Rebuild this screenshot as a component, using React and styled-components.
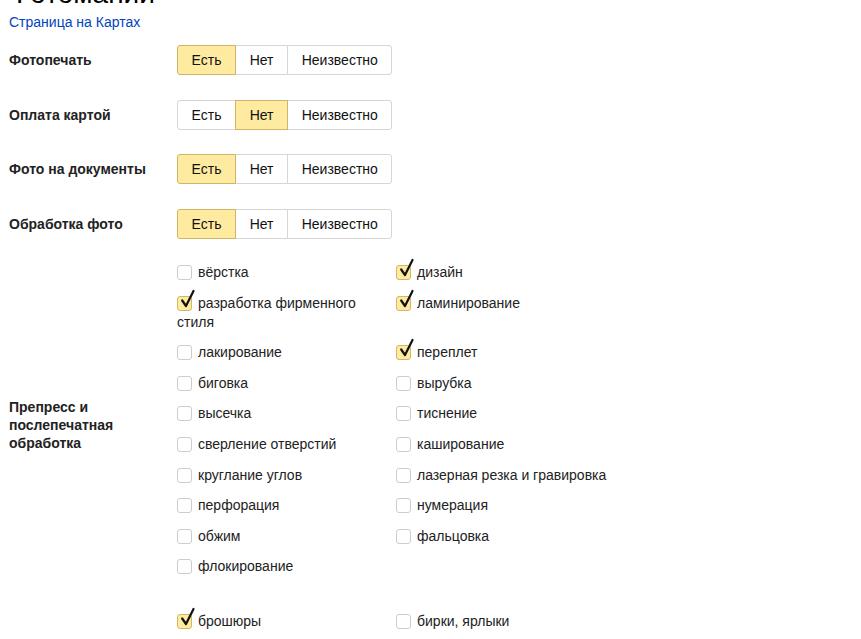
import React from "react";
import styled, { createGlobalStyle } from "styled-components";

const GlobalStyle = createGlobalStyle`
    body {
        margin: 0;
        background: #fff;
        font-family: "Liberation Sans", Arial, sans-serif;
        font-size: 14px;
        color: #222;
    }
`

const options = ['Есть', 'Нет', 'Неизвестно']

const features = [
    { title: 'Фотопечать', value: 0 },
    { title: 'Оплата картой', value: 1 },
    { title: 'Фото на документы', value: 0 },
    { title: 'Обработка фото', value: 0 },
]

const groups = [
    {
        title: 'Препресс и послепечатная обработка',
        items: [
            ['вёрстка', false], ['дизайн', true],
            ['разработка фирменного стиля', true], ['ламинирование', true],
            ['лакирование', false], ['переплет', true],
            ['биговка', false], ['вырубка', false],
            ['высечка', false], ['тиснение', false],
            ['сверление отверстий', false], ['каширование', false],
            ['круглание углов', false], ['лазерная резка и гравировка', false],
            ['перфорация', false], ['нумерация', false],
            ['обжим', false], ['фальцовка', false],
            ['флокирование', false],
        ],
    },
    {
        title: 'Полиграфическая продукция',
        items: [
            ['брошюры', true], ['бирки, ярлыки', false],
            ['визитки', false], ['буклеты', false],
            ['календари', false], ['каталоги', false],
            ['конверты', false], ['листовки', false],
            ['открытки', false], ['плакаты', false],
        ],
    },
]

function CheckMark() {
    return (
        <Tick width="16" height="20" viewBox="0 0 16 20">
            <path d="M3.2 11.5 L7 17 L14.5 2" fill="none" stroke="#111" strokeWidth="2.2" strokeLinecap="round" strokeLinejoin="round" />
        </Tick>
    )
}

export default function App() {
    return (
        <>
            <GlobalStyle />
            <Page>
                <Title>Фотомании</Title>
                <MapLink href="#">Страница на Картах</MapLink>
                <Fields>
                    {features.map(f => (
                        <Field key={f.title}>
                            <Label>{f.title}</Label>
                            <Switch>
                                {options.map((o, i) => (
                                    <Option key={o} $active={i === f.value}>{o}</Option>
                                ))}
                            </Switch>
                        </Field>
                    ))}
                    {groups.map(g => (
                        <Field key={g.title}>
                            <Label>{g.title}</Label>
                            <CheckGrid>
                                {g.items.map(([name, checked]) => (
                                    <CheckItem key={name}>
                                        <Box $checked={checked}>{checked && <CheckMark />}</Box>
                                        {name}
                                    </CheckItem>
                                ))}
                            </CheckGrid>
                        </Field>
                    ))}
                </Fields>
            </Page>
        </>
    )
}

const Page = styled.div`
    padding-left: 9px;
`

const Title = styled.h1`
    margin: -22px 0 0;
    font-size: 28px;
    line-height: 32px;
    font-weight: 400;
    color: #000;
`

const MapLink = styled.a`
    display: inline-block;
    margin-top: 3.5px;
    font-size: 14px;
    line-height: 17px;
    color: #04b;
    text-decoration: none;
`

const Fields = styled.div`
    display: flex;
    flex-direction: column;
    gap: 24.5px;
    margin-top: 14.5px;
`

const Field = styled.div`
    display: flex;
    align-items: center;
`

const Label = styled.div`
    width: 150px;
    margin-right: 18px;
    flex-shrink: 0;
    font-weight: 700;
    line-height: 18px;
    color: #222;
`

const Switch = styled.div`
    display: flex;
`

const Option = styled.div`
    height: 28px;
    padding: 0 13.6px;
    display: flex;
    align-items: center;
    line-height: 28px;
    border: 1px solid ${p => p.$active ? '#cfb569' : '#d6d6d6'};
    margin-left: -1px;
    background: ${p => p.$active ? '#ffeba0' : '#fff'};
    color: #111;
    z-index: ${p => p.$active ? 1 : 0};

    &:first-child {
        margin-left: 0;
        border-radius: 3px 0 0 3px;
    }
    &:last-child {
        border-radius: 0 3px 3px 0;
    }
`

const CheckGrid = styled.div`
    display: grid;
    grid-template-columns: 200px 260px;
    column-gap: 19px;
    align-items: start;
`

const CheckItem = styled.div`
    line-height: 19px;
    margin-bottom: 11.6px;
    color: #222;
`

const Box = styled.span`
    position: relative;
    display: inline-block;
    box-sizing: border-box;
    width: 15px;
    height: 15px;
    margin-right: 6px;
    vertical-align: -3px;
    border: 1px solid ${p => p.$checked ? '#d0b869' : '#cdcdcd'};
    border-radius: 3px;
    background: ${p => p.$checked ? '#ffeba0' : '#fff'};
`

const Tick = styled.svg`
    position: absolute;
    left: 1px;
    top: -8px;
`
